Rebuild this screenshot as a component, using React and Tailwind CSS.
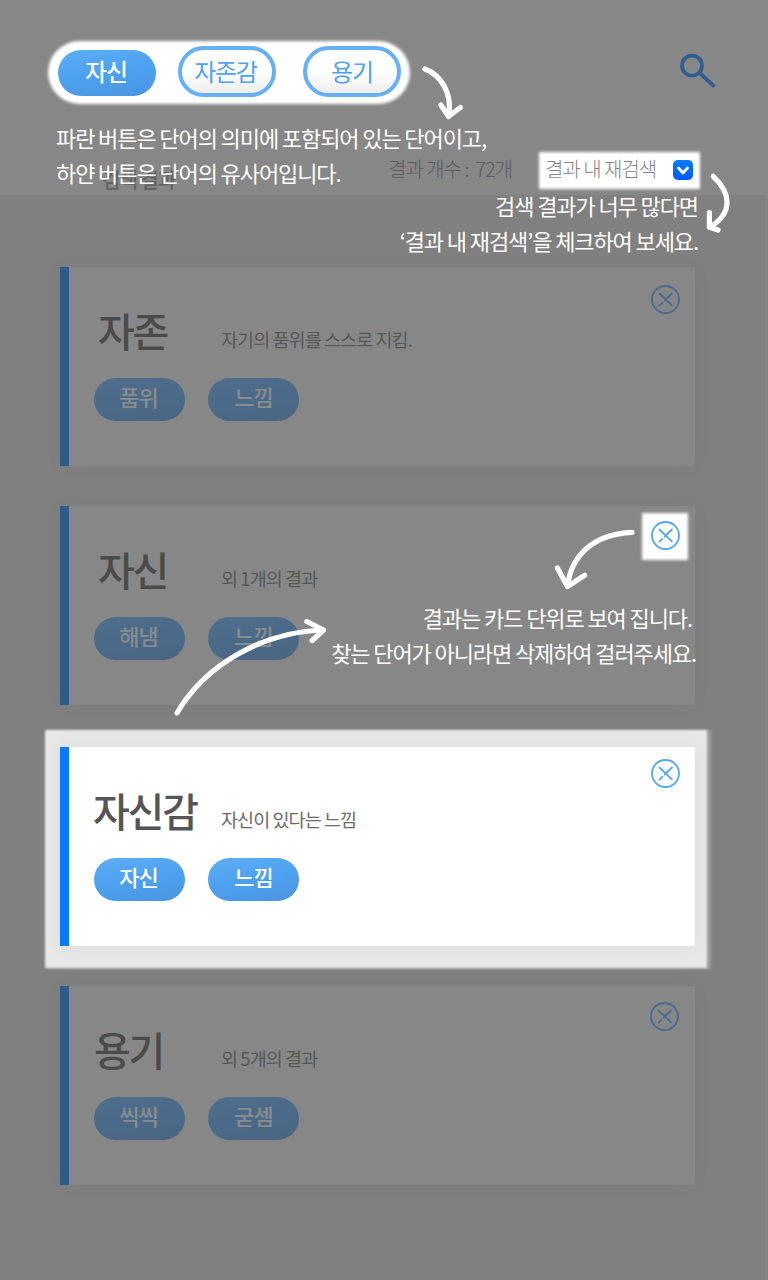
import React from "react";

function Arrow({ d }) {
  return <path d={d} fill="none" stroke="#fff" strokeWidth="5.2" strokeLinecap="round" strokeLinejoin="round" />;
}

function CloseIcon({ className }) {
  return (
    <svg viewBox="0 0 29 29" className={"h-[29px] w-[29px] " + className} fill="none" stroke="currentColor" strokeWidth="1.8" strokeLinecap="round">
      <circle cx="14.5" cy="14.5" r="13.5" />
      <path d="M8.5 8.5L20.9 20.4M20.9 8.5L13.7 15.5M11.4 17.9L8.5 20.6" />
    </svg>
  );
}

function Tag({ children, lit, className }) {
  return (
    <button
      className={
        "flex h-[43px] w-[91px] items-center justify-center rounded-full pb-[7px] text-[22px] leading-[32px] font-medium tracking-[-0.05em] " +
        (lit
          ? "bg-linear-[170deg,#5fadf6_0%,#4da1ef_50%,#4a94e0_100%] text-white "
          : "bg-linear-[170deg,#4f6e8c_0%,#4b6a89_50%,#496582_100%] text-[#898b8d] ") +
        className
      }
    >
      {children}
    </button>
  );
}

function Card({ title, desc, tags, lit, className, titleClass, closeClass }) {
  return (
    <article
      className={
        "flex h-[199px] w-[635px] shrink-0 border-l-[9px] " +
        (lit
          ? "relative border-[#047bff] bg-white shadow-[0_0_18px_rgba(0,0,0,0.05)] "
          : "border-[#2f5b8a] bg-[#878787] shadow-[0_0_20px_rgba(0,0,0,0.03)] ") +
        className
      }
    >
      <div className="flex-1 pt-[33px] pl-[25px]">
        <div className="flex h-[60px] items-start whitespace-nowrap">
          <h2
            className={
              "w-[127px] shrink-0 text-[40px] leading-[60px] font-medium tracking-[-0.055em] " +
              (lit ? "text-[#555] " : "text-[#4b4b4b] ") + titleClass
            }
          >
            {title}
          </h2>
          <p className={"pt-[25px] text-[18.5px] leading-[28px] tracking-[-0.05em] " + (lit ? "text-[#6c6c6c]" : "text-[#575757]")}>{desc}</p>
        </div>
        <div className="mt-[18px] flex gap-[23px]">
          {tags.map((t, i) => (
            <Tag key={t} lit={lit} className={i === 0 ? "pr-[2px]" : ""}>{t}</Tag>
          ))}
        </div>
      </div>
      <div className={closeClass}>
        <CloseIcon className={lit ? "text-[#55a7f3]" : "text-[#4a6b8f]"} />
      </div>
    </article>
  );
}

const hint = "absolute text-[22px] leading-[35px] tracking-[-0.05em] whitespace-nowrap text-white";

export default function App() {
  return (
    <div className="relative flex h-[1280px] w-[768px] flex-col overflow-hidden bg-[#808080] font-['Noto_Sans_CJK_KR',sans-serif]">
      <header className="h-[195px] shrink-0 bg-[#878787]">
        <div className="flex items-start justify-between pt-[42px] pr-[52px] pl-[50px]">
          <div className="relative flex h-[60px] w-[358px] items-start pl-[8px] text-[24px] leading-[36px] tracking-[-0.05em]">
            <span className="absolute -inset-x-[2px] -top-[1.5px] -bottom-[1.5px] rounded-full bg-white blur-[1.8px]"></span>
            <button className="relative mt-[8px] flex h-[46px] w-[98px] items-center justify-center rounded-full bg-linear-[170deg,#5fadf6_0%,#4da1ef_50%,#4a94e0_100%] pr-[2px] pb-[4px] font-medium text-white">자신</button>
            <button className="relative mt-[4px] ml-[22px] flex h-[51px] w-[98px] items-center justify-center rounded-full border-4 border-[#65b0f8] bg-linear-to-b from-white from-50% to-[#eee] pr-[3px] pb-[2px] text-[#4fa3f2]">자존감</button>
            <button className="relative mt-[4px] ml-[27px] flex h-[51px] w-[98px] items-center justify-center rounded-full border-4 border-[#65b0f8] bg-linear-to-b from-white from-50% to-[#eee] pb-[2px] text-[#4fa3f2]">용기</button>
          </div>
          <svg className="mt-[11px] h-[36px] w-[37px]" viewBox="0 0 37 36" fill="none" stroke="#2f5d90" strokeWidth="3.8">
            <circle cx="13" cy="12.7" r="10" />
            <path d="M20.5 19.9L35.5 33.6" />
          </svg>
        </div>
        <div className="mt-[49px] flex h-[38px] items-center text-[20px] leading-[30px] font-light tracking-[-0.05em] whitespace-nowrap">
          <span className="mt-[20px] w-[284px] pl-[102px] font-medium text-[#626262]">검색 결과</span>
          <span className="-mt-[2px] w-[256px] pl-[104px] whitespace-pre text-[#5c5c5c]">결과 개수 :  72개</span>
          <label className="relative flex h-[36px] w-[158px] items-center justify-between pr-[5px] pl-[5px] text-[#858585]">
            <span className="absolute -inset-x-[1.5px] -top-[0.5px] -bottom-[0.5px] bg-white blur-[1.5px]"></span>
            <span className="relative -mt-[2px]">결과 내 재검색</span>
            <span className="relative flex h-5 w-5 items-center justify-center rounded-[5px] bg-linear-to-b from-[#047bff] to-[#0458ff]">
              <svg className="h-5 w-5" viewBox="0 0 20 20" fill="none" stroke="#fff" strokeWidth="2.8" strokeLinecap="round" strokeLinejoin="round">
                <path d="M5.5 8L10 13L14.5 8" />
              </svg>
            </span>
          </label>
        </div>
      </header>

      <main className="flex flex-1 border-r-[3px] border-[#848484]">
        <div className="flex flex-col">
          <Card title="자존" desc="자기의 품위를 스스로 지킴." tags={["품위", "느낌"]} className="mt-[72px] ml-[60px]" titleClass="pl-[4px]" closeClass="pt-[18px] pr-[15px]" />
          <Card title="자신" desc="외 1개의 결과" tags={["해냄", "느낌"]} className="mt-[40px] ml-[60px]" titleClass="pl-[4px]" closeClass="pt-[15px] pr-[15px]" />
          <section className="relative mt-[26px] ml-[47px] h-[236px] w-[660px] pt-[16px] pl-[13px]">
            <span className="absolute -top-[1px] -right-[4px] -bottom-[1.5px] left-0 bg-[#9c9c9c] blur-[1px]"></span>
            <span className="absolute -top-[1.5px] right-0 -bottom-[1px] -left-[2px] bg-[#e7e7e7] blur-[1.2px]"></span>
            <Card title="자신감" desc="자신이 있다는 느낌" tags={["자신", "느낌"]} lit className="" titleClass="-indent-[1px]" closeClass="pt-[12px] pr-[15px]" />
          </section>
          <Card title="용기" desc="외 5개의 결과" tags={["씩씩", "굳셈"]} className="mt-[19px] ml-[60px]" titleClass="" closeClass="pt-[16px] pr-[16px]" />
        </div>
      </main>

      <div className="absolute top-[514px] left-[643px] flex h-[44px] w-[43px] pt-[7px] pl-[8px]">
        <span className="absolute -inset-[1.5px] bg-white blur-[1.5px]"></span>
        <CloseIcon className="relative text-[#55a7f3]" />
      </div>

      <p className={hint + " top-[120px] left-[56px]"}>
        파란 버튼은 단어의 의미에 포함되어 있는 단어이고,
        <br />
        하얀 버튼은 단어의 유사어입니다.
      </p>
      <p className={hint + " top-[188px] right-[70px] text-right"}>
        검색 결과가 너무 많다면
        <br />
        ‘결과 내 재검색’을 체크하여 보세요.
      </p>
      <p className={hint + " top-[600px] right-[72px] text-right"}>
        <span className="pr-[4px]">결과는 카드 단위로 보여 집니다.</span>
        <br />
        찾는 단어가 아니라면 삭제하여 걸러주세요.
      </p>

      <svg className="pointer-events-none absolute inset-0 h-full w-full" viewBox="0 0 768 1280">
        <Arrow d="M424.9 69C441 75 453 94 448.6 116.5M440.9 105L448.6 116.5L460.4 107.5" />
        <Arrow d="M713.2 176.3C731 193 733.5 213 709.4 227.3M709.4 212.7V227.3L718 230" />
        <Arrow d="M632 532.3C594 534 571 555 567.5 586.5M557.4 568L567.5 586.5L584.7 575.3" />
        <Arrow d="M177 713C205 665 262 632 323.5 630M306.8 621.5L323.5 630L312.2 640.5" />
      </svg>
    </div>
  );
}
